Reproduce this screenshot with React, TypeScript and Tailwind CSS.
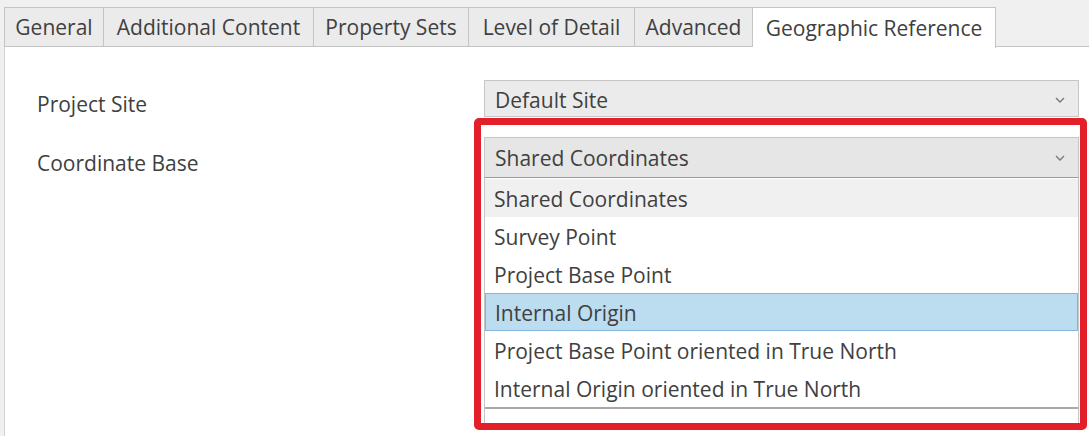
import React from 'react';

const tabs = [
  { label: 'General', width: 'w-[100px]' },
  { label: 'Additional Content', width: 'w-[210px]' },
  { label: 'Property Sets', width: 'w-[155px]' },
  { label: 'Level of Detail', width: 'w-[166px]' },
  { label: 'Advanced', width: 'w-[118px]' },
];

const options = [
  'Shared Coordinates',
  'Survey Point',
  'Project Base Point',
  'Internal Origin',
  'Project Base Point oriented in True North',
  'Internal Origin oriented in True North',
];

const Chevron = () => (
  <svg width="10" height="6" viewBox="0 0 10 6" className="shrink-0">
    <path d="M1 1 L5 5 L9 1" fill="none" stroke="#7a7a7a" strokeWidth="1.4" />
  </svg>
);

const App: React.FC = () => {
  return (
    <div
      className="relative w-[1089px] h-[436px] overflow-hidden bg-[#f0f0f0] pt-[7px] pl-[4px] text-[21px] leading-[28px] text-[#404040]"
      style={{ fontFamily: '"Open Sans", "Noto Sans", sans-serif' }}
    >
      {/* tab strip */}
      <div className="flex h-[40px] relative z-10">
        {tabs.map((t, i) => (
          <div
            key={t.label}
            className={`${t.width} h-[40px] flex items-center justify-center bg-[#ebebeb] border-t border-r border-b border-[#c4c4c4] ${i === 0 ? 'border-l' : ''}`}
          >
            {t.label}
          </div>
        ))}
        <div className="w-[243px] h-[41px] flex items-center justify-center bg-white border-t border-r border-[#c4c4c4]">
          Geographic Reference
        </div>
        <div className="flex-1 border-b border-[#c4c4c4]" />
      </div>

      {/* page content */}
      <div className="bg-white border-l border-[#d4d4d4] h-[389px] pl-[32px] pt-[33px]">
        <div className="flex">
          <div className="w-[447px] pt-[10px]">Project Site</div>
          <div className="w-[595px] h-[37px] flex items-center justify-between pl-[10px] pr-[13px] pt-[2px] bg-[#ebebeb] border border-[#c6c6c6]">
            <span>Default Site</span>
            <Chevron />
          </div>
        </div>

        <div className="flex mt-[19px]">
          <div className="w-[447px] pt-[12px]">Coordinate Base</div>
          <div className="w-[595px] flex flex-col">
            <div className="h-[41px] flex items-center justify-between pl-[10px] pr-[13px] bg-[#e6e6e6] border border-[#c6c6c6] border-b-[#9a9a9a]">
              <span>Shared Coordinates</span>
              <Chevron />
            </div>
            <div className="border-x border-[#c6c6c6] bg-white pt-[1px]">
              {options.map((o, i) => (
                <div
                  key={o}
                  className={`h-[38px] flex items-center pl-[9px] pt-[2px] ${
                    i === 0
                      ? 'bg-[#f0f0f0]'
                      : i === 3
                      ? 'bg-[#bcdcf0] border border-[#7fb5de]'
                      : ''
                  }`}
                >
                  {o}
                </div>
              ))}
              <div className="h-[18px] border-t-2 border-[#a8a8a8]" />
            </div>
          </div>
        </div>
      </div>

      {/* red highlight annotation */}
      <div className="absolute left-[474px] top-[118px] w-[613px] h-[312px] border-[7px] border-[#e3202a] rounded-[5px] pointer-events-none" />
    </div>
  );
};

export default App;
